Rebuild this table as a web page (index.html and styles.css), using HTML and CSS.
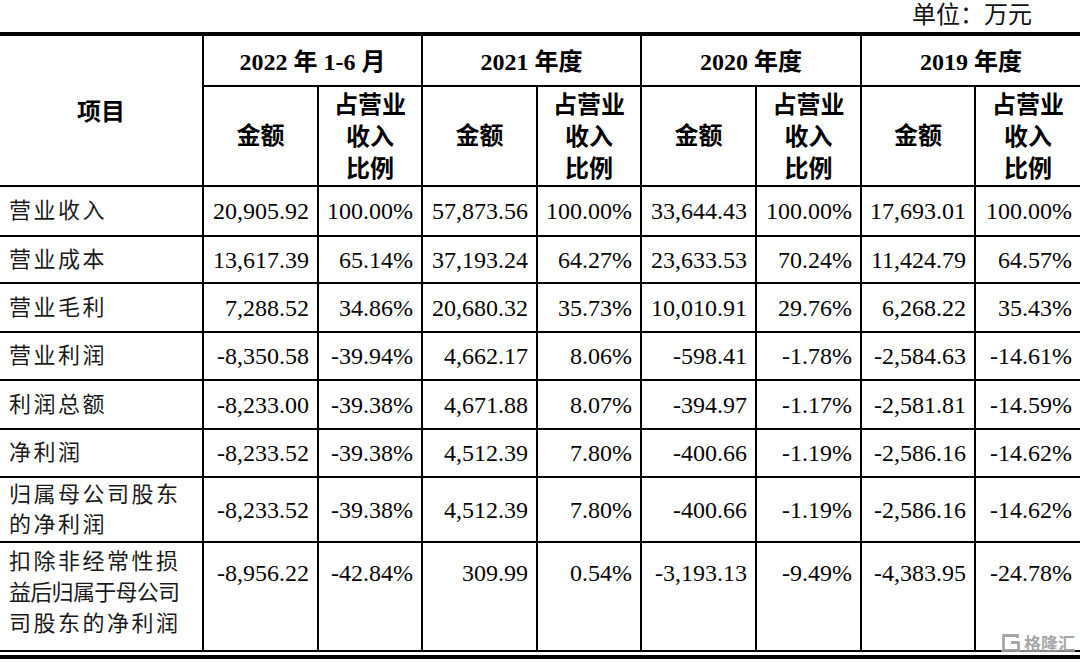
FILE: index.html
```html
<!DOCTYPE html>
<html lang="zh-CN">
<head>
<meta charset="utf-8">
<title>财务数据</title>
<link rel="stylesheet" href="styles.css">
</head>
<body>
<div class="page">
  <div class="unit">单位：万元</div>
  <div class="table-wrap">
    <table class="fin">
      <colgroup>
        <col class="c-item">
        <col class="c-amt"><col class="c-pct">
        <col class="c-amt"><col class="c-pct">
        <col class="c-amt"><col class="c-pct2">
        <col class="c-amt2"><col class="c-pct">
      </colgroup>
      <thead>
        <tr class="h1">
          <th rowspan="2" class="item-h">项目</th>
          <th colspan="2">2022 年 1-6 月</th>
          <th colspan="2">2021 年度</th>
          <th colspan="2">2020 年度</th>
          <th colspan="2">2019 年度</th>
        </tr>
        <tr class="h2">
          <th>金额</th><th class="ratio">占营业<br>收入<br>比例</th>
          <th>金额</th><th class="ratio">占营业<br>收入<br>比例</th>
          <th>金额</th><th class="ratio">占营业<br>收入<br>比例</th>
          <th>金额</th><th class="ratio">占营业<br>收入<br>比例</th>
        </tr>
      </thead>
      <tbody>
        <tr class="r50">
          <td class="item">营业收入</td>
          <td>20,905.92</td><td>100.00%</td>
          <td>57,873.56</td><td>100.00%</td>
          <td>33,644.43</td><td>100.00%</td>
          <td>17,693.01</td><td>100.00%</td>
        </tr>
        <tr class="r47">
          <td class="item">营业成本</td>
          <td>13,617.39</td><td>65.14%</td>
          <td>37,193.24</td><td>64.27%</td>
          <td>23,633.53</td><td>70.24%</td>
          <td>11,424.79</td><td>64.57%</td>
        </tr>
        <tr class="r49">
          <td class="item">营业毛利</td>
          <td>7,288.52</td><td>34.86%</td>
          <td>20,680.32</td><td>35.73%</td>
          <td>10,010.91</td><td>29.76%</td>
          <td>6,268.22</td><td>35.43%</td>
        </tr>
        <tr class="r48">
          <td class="item">营业利润</td>
          <td>-8,350.58</td><td>-39.94%</td>
          <td>4,662.17</td><td>8.06%</td>
          <td>-598.41</td><td>-1.78%</td>
          <td>-2,584.63</td><td>-14.61%</td>
        </tr>
        <tr class="r49">
          <td class="item">利润总额</td>
          <td>-8,233.00</td><td>-39.38%</td>
          <td>4,671.88</td><td>8.07%</td>
          <td>-394.97</td><td>-1.17%</td>
          <td>-2,581.81</td><td>-14.59%</td>
        </tr>
        <tr class="r48">
          <td class="item">净利润</td>
          <td>-8,233.52</td><td>-39.38%</td>
          <td>4,512.39</td><td>7.80%</td>
          <td>-400.66</td><td>-1.19%</td>
          <td>-2,586.16</td><td>-14.62%</td>
        </tr>
        <tr class="r65">
          <td class="item multi">归属母公司股东<br>的净利润</td>
          <td>-8,233.52</td><td>-39.38%</td>
          <td>4,512.39</td><td>7.80%</td>
          <td>-400.66</td><td>-1.19%</td>
          <td>-2,586.16</td><td>-14.62%</td>
        </tr>
        <tr class="r109 top-row">
          <td class="item multi">扣除非经常性损<br><span class="tight">益后归属于母公司</span><br>司股东的净利润</td>
          <td>-8,956.22</td><td>-42.84%</td>
          <td>309.99</td><td>0.54%</td>
          <td>-3,193.13</td><td>-9.49%</td>
          <td>-4,383.95</td><td>-24.78%</td>
        </tr>
      </tbody>
    </table>
    <div class="watermark">
      <svg class="wm-logo" width="20" height="20" viewBox="0 0 20 20" aria-hidden="true">
        <path d="M16.5 5 V2.5 H2.5 V17.5 H17.5 V9.5 H10" fill="none" stroke="currentColor" stroke-width="2.8" stroke-linejoin="round"/>
      </svg>
      <span class="wm-text">格隆汇</span>
    </div>
  </div>
</div>
</body>
</html>
```

FILE: styles.css
```css
html, body {
  margin: 0;
  padding: 0;
  background: #ffffff;
}

body {
  font-family: "Liberation Serif", "Noto Sans CJK SC", serif;
  color: #000;
  overflow: hidden;
}

.page {
  width: 1080px;
}

.unit {
  height: 32px;
  line-height: 30px;
  font-size: 24px;
  text-align: right;
  padding-right: 48px;
  color: #111;
}

.table-wrap {
  position: relative;
  border-top: 4px solid #000;
  border-bottom: 4px solid #000;
  padding-bottom: 3px;
}

.fin {
  width: 1080px;
  table-layout: fixed;
  border-collapse: separate;
  border-spacing: 0;
}

.c-item { width: 204px; }
.c-amt { width: 115px; }
.c-pct { width: 104px; }
.c-pct2 { width: 105px; }
.c-amt2 { width: 114px; }

.fin th,
.fin td {
  box-sizing: border-box;
  border-right: 2px solid #000;
  border-bottom: 2px solid #000;
  padding: 0 8px;
  vertical-align: middle;
  white-space: nowrap;
}

.fin tr > :last-child {
  border-right: none;
}

.fin th {
  font-weight: bold;
  font-size: 24px;
  text-align: center;
  line-height: 32px;
}

.fin .h1 th {
  padding-top: 3px;
}

.fin th.ratio {
  line-height: 32px;
  padding-top: 2px;
}

.fin td {
  font-size: 24px;
  line-height: 30px;
  text-align: right;
  color: #050505;
}

.fin td.item {
  text-align: left;
  padding-left: 9px;
  padding-right: 0;
  font-size: 22px;
  letter-spacing: 2.5px;
  color: #1a1a1a;
}

.fin td.multi {
  line-height: 30px;
}

.tight {
  letter-spacing: -0.7px;
}

.h1 { height: 51px; }
.h2 { height: 97px; }
.r47 { height: 47px; }
.r48 { height: 48px; }
.r49 { height: 49px; }
.r50 { height: 50px; }
.r65 { height: 65px; }
.r109 { height: 109px; }

.top-row td {
  vertical-align: top;
  padding-top: 15px;
}

.top-row td.item {
  padding-top: 3px;
  line-height: 31px;
}

.watermark {
  position: absolute;
  right: 5px;
  bottom: 2px;
  display: flex;
  align-items: center;
  gap: 3px;
  color: rgba(150, 150, 150, 0.85);
  font-family: "Noto Sans CJK SC", sans-serif;
  font-weight: bold;
  font-size: 17px;
  line-height: 20px;
  background: rgba(255, 255, 255, 0.5);
}

.wm-logo {
  display: block;
}
```
